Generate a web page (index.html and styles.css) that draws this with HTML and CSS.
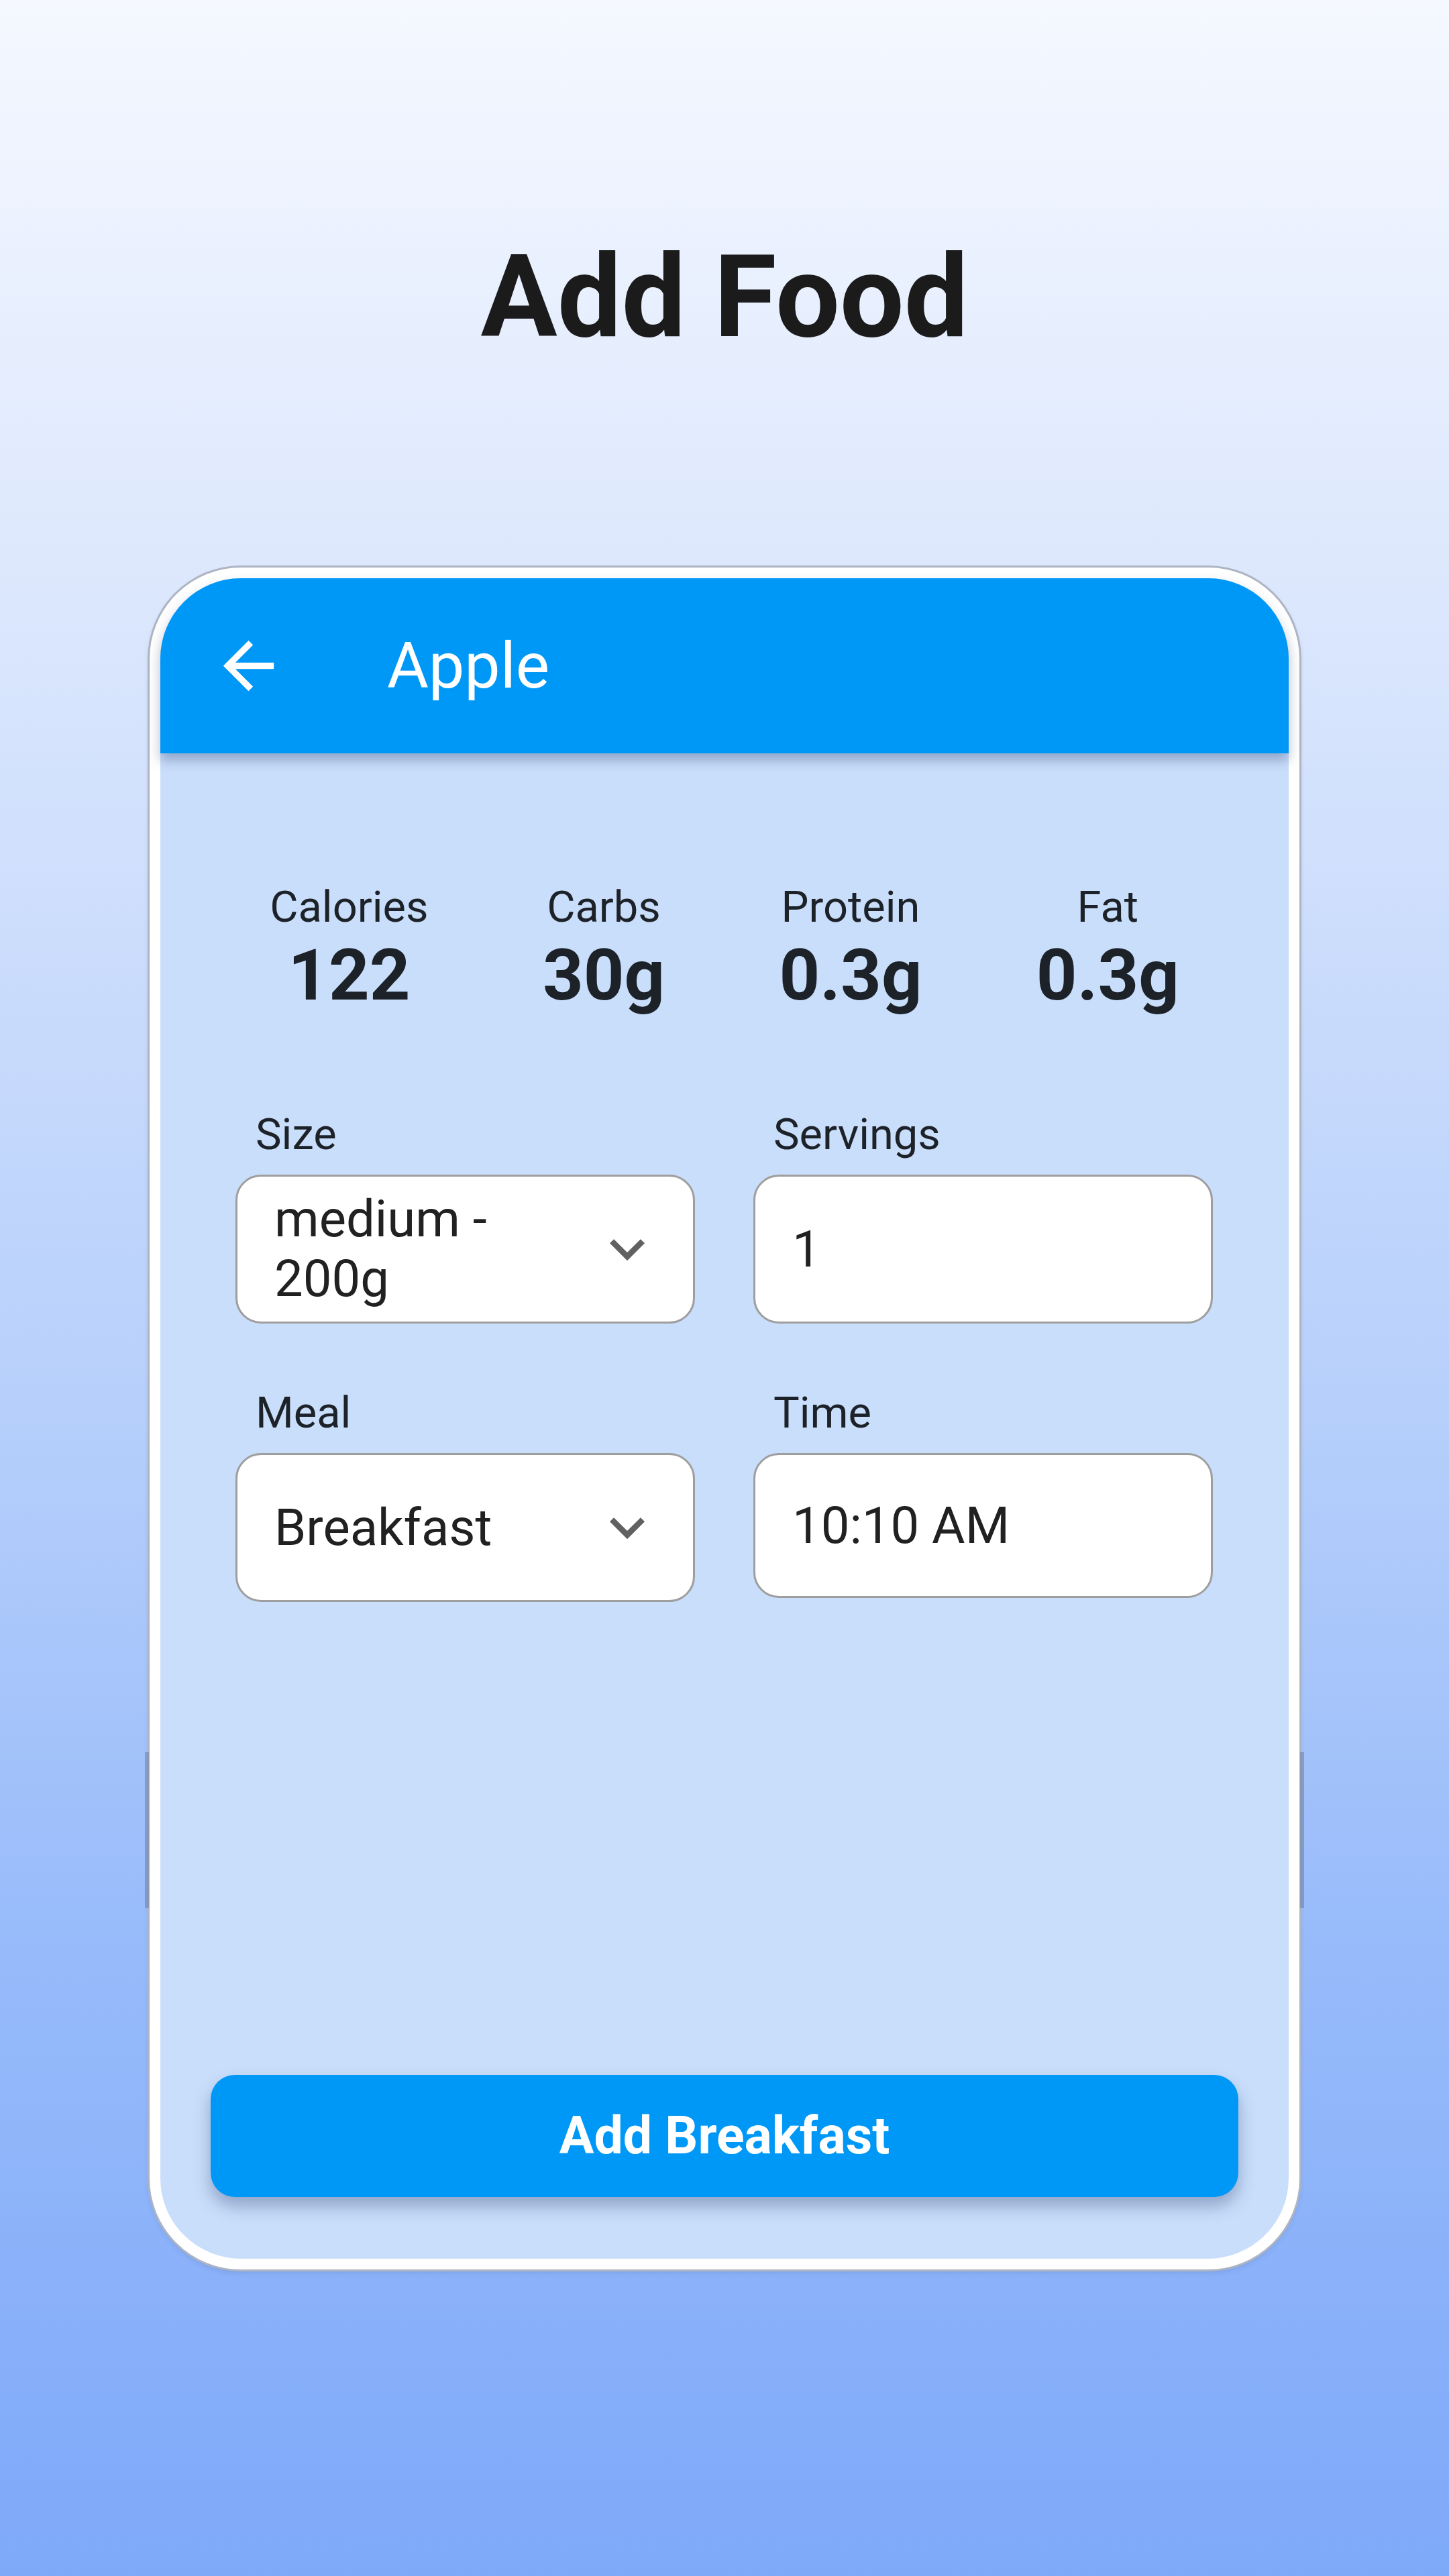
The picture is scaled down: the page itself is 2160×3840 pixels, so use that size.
FILE: index.html
```html
<!DOCTYPE html>
<html lang="en">

<head>
    <meta charset="UTF-8">
    <meta name="viewport" content="width=device-width, initial-scale=1.0">
    <title>Add Food</title>
    <link rel="stylesheet" href="styles.css">
</head>

<body>

    <div class="page">
        <h1 class="page-title">Add Food</h1>

        <div class="phone">
            <header class="app-bar">
                <svg class="back-icon" viewBox="0 0 24 24">
                    <path d="M20 11H7.83l5.59-5.59L12 4l-8 8 8 8 1.41-1.41L7.83 13H20v-2z" />
                </svg>
                <span class="app-title">Apple</span>
            </header>

            <main class="content">
                <div class="stats">
                    <div class="stat">
                        <span class="stat-label">Calories</span>
                        <span class="stat-value">122</span>
                    </div>
                    <div class="stat">
                        <span class="stat-label">Carbs</span>
                        <span class="stat-value">30g</span>
                    </div>
                    <div class="stat">
                        <span class="stat-label">Protein</span>
                        <span class="stat-value">0.3g</span>
                    </div>
                    <div class="stat">
                        <span class="stat-label">Fat</span>
                        <span class="stat-value">0.3g</span>
                    </div>
                </div>

                <div class="fields">
                    <div class="field">
                        <label class="field-label">Size</label>
                        <div class="box select">
                            <span class="box-text">medium - 200g</span>
                            <svg class="chevron" viewBox="0 0 24 24">
                                <path d="M16.59 8.59L12 13.17 7.41 8.59 6 10l6 6 6-6z" />
                            </svg>
                        </div>
                    </div>
                    <div class="field">
                        <label class="field-label">Servings</label>
                        <div class="box">
                            <span class="box-text">1</span>
                        </div>
                    </div>
                    <div class="field">
                        <label class="field-label">Meal</label>
                        <div class="box select">
                            <span class="box-text">Breakfast</span>
                            <svg class="chevron" viewBox="0 0 24 24">
                                <path d="M16.59 8.59L12 13.17 7.41 8.59 6 10l6 6 6-6z" />
                            </svg>
                        </div>
                    </div>
                    <div class="field">
                        <label class="field-label">Time</label>
                        <div class="box box-time">
                            <span class="box-text">10:10 AM</span>
                        </div>
                    </div>
                </div>

                <button class="add-btn">Add Breakfast</button>
            </main>
        </div>
    </div>

</body>

</html>
```

FILE: styles.css
```css
body {
    margin: 0;
    min-height: 3840px;
    font-family: Roboto, "Liberation Sans", sans-serif;
    background: linear-gradient(180deg, #f5f8ff 0%, #dde8fd 22%, #b6cffb 55%, #98bbfa 75%, #7ea9f9 100%);
}

.page {
    display: flex;
    flex-direction: column;
    align-items: center;
    padding-top: 358px;
}

.page-title {
    margin: 0;
    font-size: 170px;
    line-height: 1;
    font-weight: 700;
    color: #1b1b1b;
}

.phone {
    position: relative;
    margin-top: 318px;
    width: 1682px;
    height: 2505px;
    border: 16px solid #ffffff;
    border-radius: 136px;
    box-shadow: 0 0 0 3px #adb4c2, 0 4px 10px rgba(40, 50, 80, 0.15);
    background-color: #c9defb;
    display: flex;
    flex-direction: column;
}

/* side buttons */
.phone::before,
.phone::after {
    content: "";
    position: absolute;
    top: 1750px;
    width: 6px;
    height: 232px;
    background-color: rgba(90, 105, 140, 0.4);
}

.phone::before {
    left: -23px;
}

.phone::after {
    right: -23px;
}

.app-bar {
    position: relative;
    z-index: 1;
    height: 261px;
    flex-shrink: 0;
    display: flex;
    align-items: center;
    padding-left: 75px;
    background-color: #0098f6;
    border-radius: 120px 120px 0 0;
    box-shadow: 0 10px 18px rgba(40, 60, 110, 0.35);
}

.back-icon {
    width: 113px;
    height: 113px;
    fill: #ffffff;
}

.app-title {
    margin-left: 150px;
    font-size: 95px;
    color: #ffffff;
}

.content {
    flex: 1;
    display: flex;
    flex-direction: column;
    padding: 190px 0 92px;
    border-radius: 0 0 120px 120px;
}

.stats {
    display: flex;
    justify-content: space-around;
    padding: 0 78px;
}

.stat {
    display: flex;
    flex-direction: column;
    align-items: center;
    color: #1d2229;
}

.stat-label {
    font-size: 65px;
    line-height: 1.2;
}

.stat-value {
    font-size: 106px;
    line-height: 1.2;
    font-weight: 700;
}

.fields {
    margin-top: 134px;
    display: grid;
    grid-template-columns: 1fr 1fr;
    column-gap: 87px;
    row-gap: 94px;
    padding: 0 113px 0 112px;
}

.field-label {
    display: block;
    padding-left: 30px;
    margin-bottom: 21px;
    font-size: 65px;
    line-height: 1.2;
    color: #1d2229;
}

.box {
    box-sizing: border-box;
    height: 222px;
    display: flex;
    align-items: center;
    padding: 0 46px 0 55px;
    background-color: #ffffff;
    border: 3px solid #9e9e9e;
    border-radius: 38px;
}

.box-time {
    height: 216px;
    margin-top: 3px;
}

.box-text {
    flex: 1;
    font-size: 76px;
    line-height: 89px;
    color: #212121;
}

.chevron {
    width: 104px;
    height: 104px;
    flex-shrink: 0;
    fill: #616161;
}

.add-btn {
    margin: auto 75px 0;
    height: 182px;
    border: none;
    border-radius: 36px;
    background-color: #0098f6;
    color: #ffffff;
    font-family: Roboto, "Liberation Sans", sans-serif;
    font-size: 77px;
    font-weight: 700;
    box-shadow: 0 14px 24px rgba(40, 60, 110, 0.35);
}
```
